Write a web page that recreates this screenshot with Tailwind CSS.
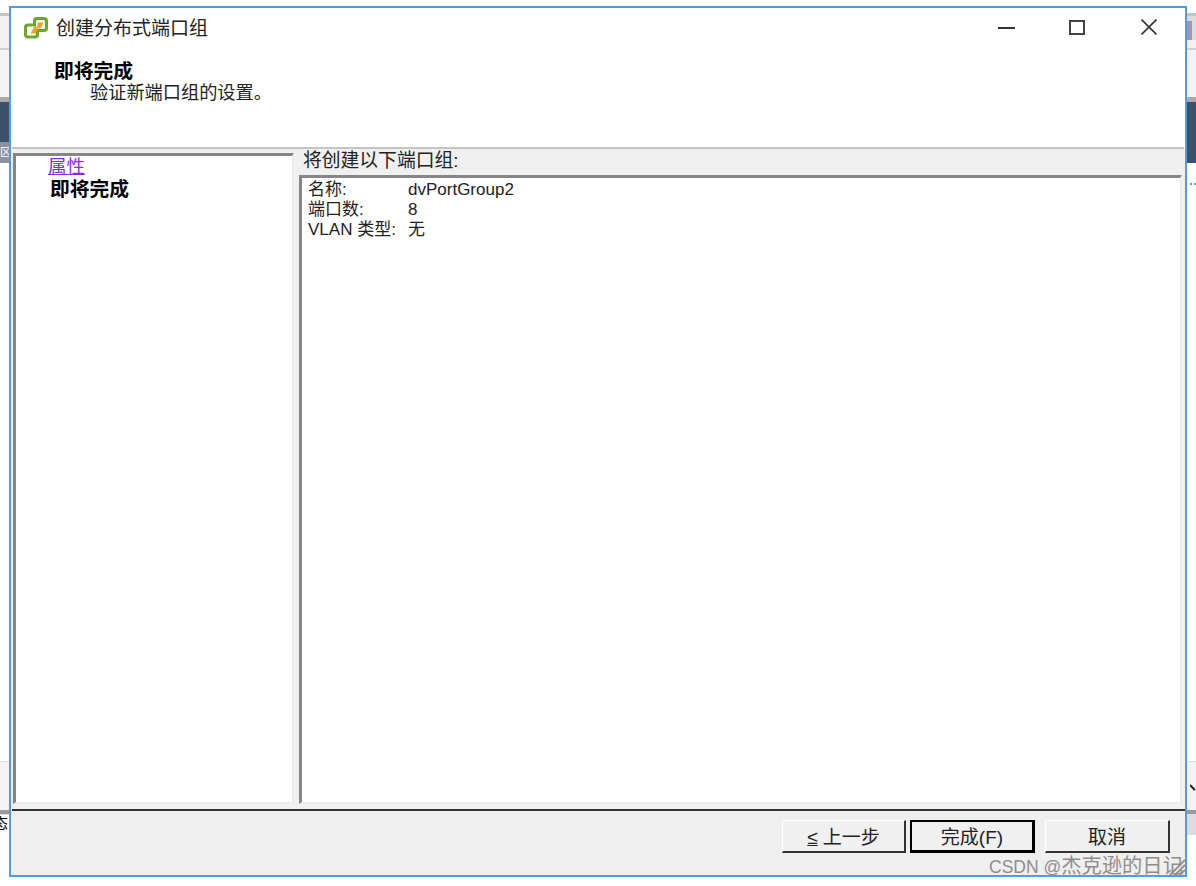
<!DOCTYPE html>
<html lang="zh-CN">
<head>
  <meta charset="UTF-8" />
  <title>创建分布式端口组</title>
  <script src="https://cdn.jsdelivr.net/npm/@tailwindcss/browser@4"></script>
</head>
<body class="bg-white w-[1196px] h-[886px] overflow-hidden relative font-['Liberation_Sans','Noto_Sans_CJK_SC',sans-serif] text-[#111]">

  <!-- desktop behind the dialog -->
  <div class="absolute left-0 top-0 w-full h-[163px] flex flex-col">
    <div class="h-[13px] bg-white"></div>
    <div class="h-[3px] bg-[#c4c4c4]"></div>
    <div class="h-[32px] bg-[#f1f1f1]"></div>
    <div class="h-[2px] bg-[#cfcfcf]"></div>
    <div class="h-[47px] bg-[#f3f3f3]"></div>
    <div class="h-[5px] bg-[#a9a9a9]"></div>
    <div class="h-[61px] bg-[#3b526c]"></div>
  </div>
  <div class="absolute left-0 top-[142px] w-[9px] h-[21px] bg-[#8b93a3] text-[11px] leading-[21px] text-white overflow-hidden">区</div>
  <div class="absolute left-0 top-[761px] w-full h-[74px] flex flex-col">
    <div class="h-px bg-[#dedede]"></div>
    <div class="h-[48px] bg-[#f3f3f3]"></div>
    <div class="h-[4px] bg-[#9a9a9a]"></div>
    <div class="h-[21px] bg-[#dcdcdc]"></div>
  </div>
  <div class="absolute left-0 top-[815px] w-[9px] h-[20px] bg-white"></div>
  <div class="absolute left-[-7px] top-[814px] w-[16px] h-[20px] overflow-hidden text-[15px] leading-[20px] text-black">态</div>
  <div class="absolute left-[1190px] top-[183px] flex gap-[2px]">
    <div class="w-[2px] h-[2px] bg-[#5b9bd5]"></div>
    <div class="w-[2px] h-[2px] bg-[#5b9bd5]"></div>
  </div>
  <svg class="absolute left-[1190px] top-[784px]" width="6" height="8" viewBox="0 0 6 8"><path d="M0 1 L5 6" stroke="#222" stroke-width="2" fill="none"/></svg>
  <div class="absolute left-[1186px] top-[16px] w-[10px] h-[24px] bg-[#dcdcdc]"></div>
  <div class="absolute left-[1187px] top-[21px] w-[5px] h-[19px] bg-[#9c97b0]"></div>

  <!-- dialog window -->
  <div class="absolute left-[9px] top-[6px] w-[1178px] h-[871px] bg-white border-2 border-[#4a9de6] flex flex-col">

    <!-- title and header -->
    <div class="h-[139px] shrink-0 flex flex-col">
      <div class="h-[40px] flex items-center pl-[12px] relative">
        <svg width="26" height="24" viewBox="0 0 26 24" class="shrink-0">
          <rect x="10" y="1" width="15" height="15" rx="4" fill="#6aa82c"/>
          <rect x="1" y="7.500" width="15" height="15" rx="4" fill="#6aa82c"/>
          <rect x="13" y="4" width="9" height="9" rx="1.500" fill="#fff"/>
          <rect x="4" y="10.500" width="9" height="9" rx="1.500" fill="#fff"/>
          <path d="M7.500 17.500 L11 11 L14 11 L15 6.500 L20.500 6.500 L17.500 12.500 L14 12.500 L13 17.500 Z" fill="#f0a21e"/>
        </svg>
        <span class="ml-[7px] mt-[1px] text-[19px] leading-none text-[#222]">创建分布式端口组</span>
        <div class="absolute right-[28px] top-0 h-[40px] flex items-center mt-[-1px]">
          <div class="w-[17px] h-[2px] bg-[#333] mt-[1px]"></div>
          <div class="ml-[54px] w-[16px] h-[15px] border-2 border-[#444]"></div>
          <svg class="ml-[56px]" width="16" height="16" viewBox="0 0 16 16"><path d="M0.500 0.500 L15.500 15.500 M15.500 0.500 L0.500 15.500" stroke="#333" stroke-width="1.600"/></svg>
        </div>
      </div>
      <div class="pl-[43px] pt-[12px] text-[19.800px] leading-[22px] font-bold text-black">即将完成</div>
      <div class="pl-[79px] text-[18.200px] leading-[22px] text-[#222]">验证新端口组的设置。</div>
    </div>

    <div class="h-[2px] shrink-0 bg-[#c4c4c4] ml-[1px] mr-px"></div>

    <!-- body -->
    <div class="flex-1 min-h-0 bg-[#f0f0f0] flex pl-[2px] pr-[3px]">
      <div class="w-[281px] shrink-0 mt-[4px] mb-[5px] bg-white border-t-[3px] border-l-[3px] border-r-[2px] border-b-[2px] border-t-[#868686] border-l-[#868686] border-r-[#ececec] border-b-[#ececec] pl-[32px]">
        <div class="text-[18.500px] leading-[22px] text-[#8a2be2] underline">属性</div>
        <div class="text-[19.800px] leading-[23px] ml-[2px] font-bold text-black">即将完成</div>
      </div>
      <div class="flex-1 min-w-0 ml-[5px] flex flex-col">
        <div class="h-[26px] pl-[4px] text-[18.800px] leading-[24px] text-[#222]">将创建以下端口组:</div>
        <div class="flex-1 min-h-0 mb-[5px] bg-white border-t-[3px] border-l-[3px] border-r-[2px] border-b-[2px] border-t-[#868686] border-l-[#868686] border-r-[#ececec] border-b-[#ececec] pl-[6px] pt-[2px] text-[#222]">
          <div class="grid grid-cols-[100px_1fr] text-[17px] leading-[20px]">
            <div>名称:</div><div>dvPortGroup2</div>
            <div>端口数:</div><div>8</div>
            <div>VLAN 类型:</div><div>无</div>
          </div>
        </div>
      </div>
    </div>

    <div class="h-[2px] shrink-0 bg-[#333] ml-px"></div>

    <!-- footer -->
    <div class="h-[64px] shrink-0 bg-[#efefef] flex items-start justify-end gap-[4px] pr-[15px] pt-[9px] relative">
      <button class="w-[124px] h-[33px] pt-[2px] bg-[#f0f0f0] border border-t-white border-l-white border-r-[2px] border-b-[2px] border-r-[#333] border-b-[#333] text-[19px] leading-none text-[#222]"><span class="underline mr-[5px]">≤</span>上一步</button>
      <button class="w-[125px] h-[33px] pt-[2px] bg-[#f0f0f0] border-2 border-r-[3px] border-b-[3px] border-black text-[19px] leading-none text-[#222]">完成(F)</button>
      <button class="w-[125px] h-[33px] pt-[2px] ml-[6px] bg-[#f0f0f0] border border-t-white border-l-white border-r-[2px] border-b-[2px] border-r-[#333] border-b-[#333] text-[19px] leading-none text-[#222]">取消</button>
      <svg class="absolute right-0 bottom-0" width="16" height="16" viewBox="0 0 16 16"><path d="M16 1 L1 16 M16 6 L6 16 M16 11 L11 16" stroke="#8e8e8e" stroke-width="1.800"/></svg>
    </div>
  </div>

  <!-- CSDN watermark -->
  <div class="absolute left-[989px] top-[855px] text-[17.500px] leading-[22px] text-[#8e8e8e] whitespace-nowrap">CSDN @<span class="text-[20.300px]">杰克逊的日记</span></div>
</body>
</html>
